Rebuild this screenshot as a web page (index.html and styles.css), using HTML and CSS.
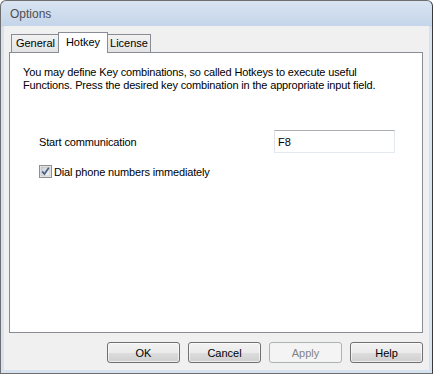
FILE: index.html
```html
<!DOCTYPE html>
<html lang="en">

<head>
    <meta charset="UTF-8">
    <title>Options</title>
    <link rel="stylesheet" href="styles.css">
</head>

<body>

    <div class="window">
        <!-- Title bar -->
        <div class="titlebar">Options</div>

        <div class="client">
            <!-- Tabs -->
            <div class="tabs">
                <div class="tab tab-general">General</div>
                <div class="tab tab-hotkey active">Hotkey</div>
                <div class="tab tab-license">License</div>
            </div>

            <!-- Tab page -->
            <div class="panel">
                <p class="intro">You may define Key combinations, so called Hotkeys to execute useful<br>Functions. Press the desired key combination in the appropriate input field.</p>

                <div class="hotkey-row">
                    <span class="hotkey-label">Start communication</span>
                    <input type="text" class="hotkey-input" value="F8">
                </div>

                <label class="check-row">
                    <svg class="checkbox" width="13" height="13" viewBox="0 0 13 13">
                        <defs>
                            <linearGradient id="boxFill" x1="0" y1="0" x2="1" y2="1">
                                <stop offset="0" stop-color="#cbcfd5" />
                                <stop offset="1" stop-color="#f4f6f8" />
                            </linearGradient>
                        </defs>
                        <rect x="0.5" y="0.5" width="12" height="12" fill="#f4f4f4" stroke="#8f8f8f" />
                        <rect x="2" y="2" width="9" height="9" fill="url(#boxFill)" stroke="#aeb3b9" stroke-width="0.6" />
                        <path d="M3.2 6.4 L5.4 9 L9.8 2.8" fill="none" stroke="#4d6185" stroke-width="1.7" />
                    </svg>
                    <span>Dial phone numbers immediately</span>
                </label>
            </div>

            <!-- Dialog buttons -->
            <div class="buttons">
                <button class="btn">OK</button>
                <button class="btn">Cancel</button>
                <button class="btn" disabled>Apply</button>
                <button class="btn">Help</button>
            </div>
        </div>
    </div>

</body>

</html>
```

FILE: styles.css
```css
* {
    margin: 0;
    padding: 0;
    box-sizing: border-box;
}

body {
    font-family: "Liberation Sans", Arial, sans-serif;
    font-size: 11px;
    color: #000;
    background-color: #fff;
}

/* Window frame */
.window {
    width: 433px;
    height: 374px;
    border: 1px solid #6e6e6e;
    border-right-color: #3a3a3a;
    border-radius: 6px 6px 0 0;
    background: linear-gradient(to bottom, #d9e4f1 0px, #c4d5ea 25px, #d6e2f0 26px, #d6e2f0 100%);
    padding: 0 3px 3px 3px;
    display: flex;
    flex-direction: column;
}

.titlebar {
    height: 25px;
    padding-left: 6px;
    line-height: 26px;
    font-size: 12px;
    color: #4e4e4e;
}

.client {
    flex: 1;
    background-color: #f0f0f0;
    padding: 6px 6px 0 5px;
    display: flex;
    flex-direction: column;
}

/* Tabs */
.tabs {
    display: flex;
    align-items: flex-end;
    padding-left: 2px;
    height: 20px;
    position: relative;
    z-index: 1;
}

.tab {
    height: 18px;
    border: 1px solid #898c95;
    border-bottom: none;
    background: linear-gradient(to bottom, #f2f2f2, #e3e3e3);
    text-align: center;
    line-height: 17px;
}

.tab-general {
    width: 49px;
}

.tab-hotkey {
    width: 50px;
    margin-left: -2px;
}

.tab-license {
    width: 44px;
    margin-left: -1px;
}

.tab.active {
    height: 21px;
    margin-bottom: -1px;
    background: #fff;
    line-height: 18px;
    position: relative;
    z-index: 2;
}

/* Tab page */
.panel {
    height: 281px;
    border: 1px solid #898c95;
    background-color: #fff;
    padding: 13px 13px 0 13px;
    letter-spacing: -0.15px;
}

.intro {
    line-height: 13px;
}

.hotkey-row {
    display: flex;
    align-items: center;
    margin: 38px 0 0 16px;
}

.hotkey-label {
    width: 235px;
}

.hotkey-input {
    width: 121px;
    height: 23px;
    border: 1px solid #e3e9ef;
    border-top-color: #abadb3;
    border-left-color: #e2e3ea;
    border-bottom-color: #e3e9ef;
    padding: 0 3px;
    font-family: "Liberation Sans", Arial, sans-serif;
    font-size: 11px;
    outline: none;
}

.check-row {
    display: flex;
    align-items: center;
    gap: 2px;
    margin: 12px 0 0 16px;
}

.checkbox {
    display: block;
}

/* Buttons */
.buttons {
    display: flex;
    justify-content: flex-end;
    gap: 8px;
    margin-top: 9px;
}

.btn {
    width: 73px;
    height: 21px;
    border: 1px solid #707070;
    border-radius: 3px;
    background: linear-gradient(to bottom, #f2f2f2 0%, #ebebeb 50%, #dddddd 51%, #cfcfcf 100%);
    font-family: "Liberation Sans", Arial, sans-serif;
    font-size: 11px;
    color: #000;
    box-shadow: inset 0 0 0 1px rgba(255, 255, 255, 0.6);
}

.btn:disabled {
    border-color: #adb2b5;
    background: #f4f4f4;
    color: #838383;
    box-shadow: none;
}
```
